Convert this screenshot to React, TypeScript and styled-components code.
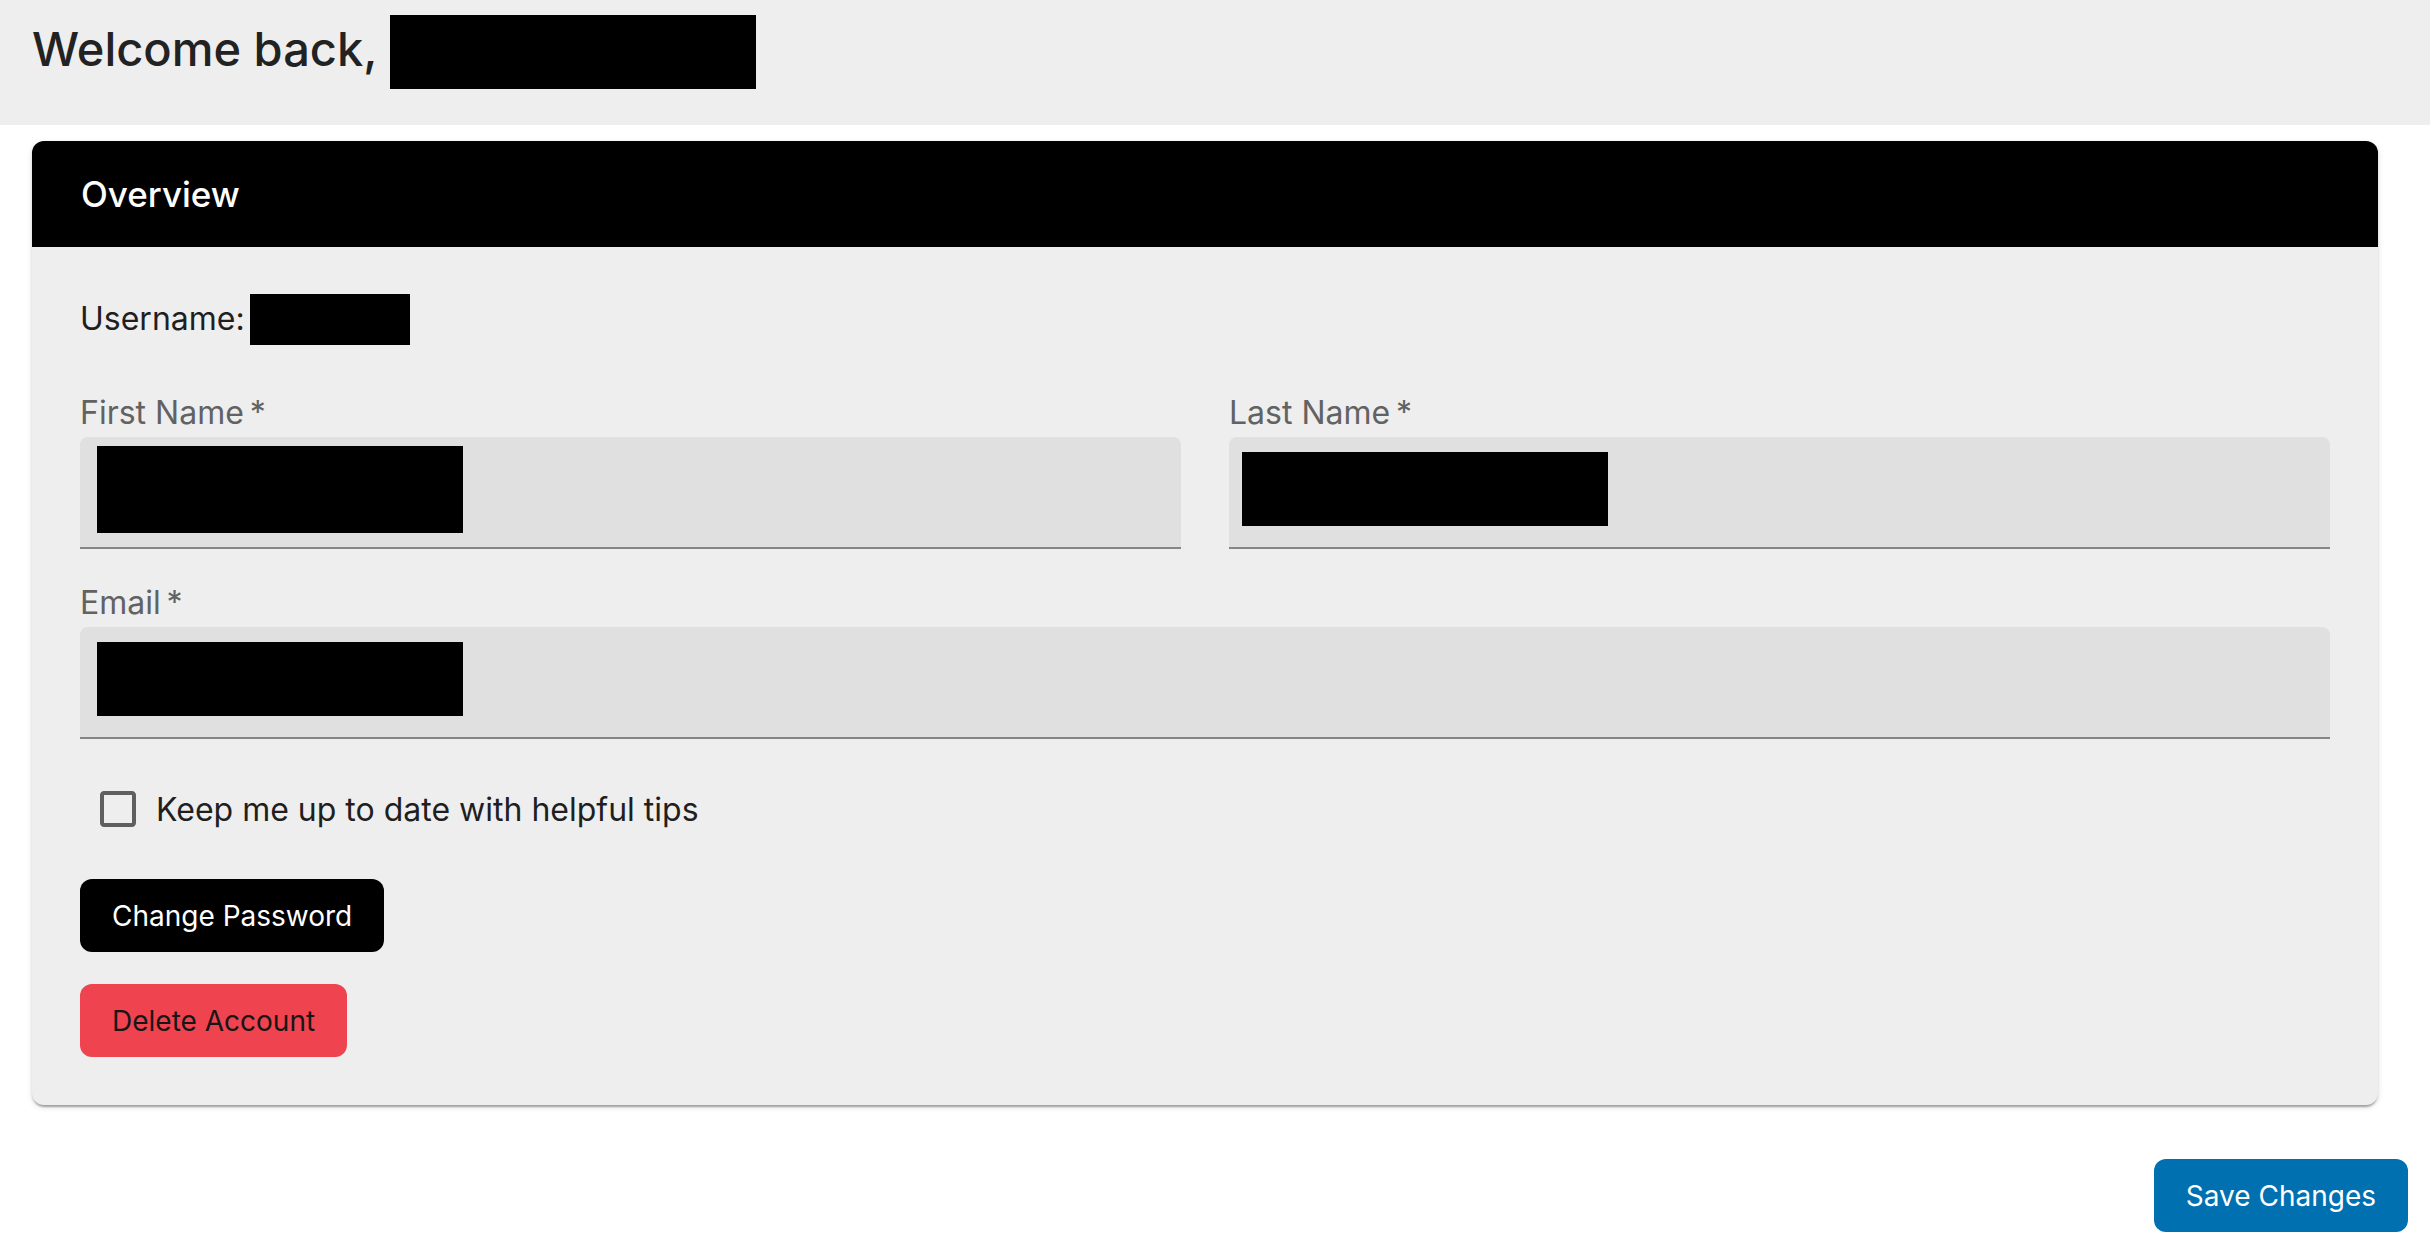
import React from "react";
import styled, { createGlobalStyle } from "styled-components";

const GlobalStyle = createGlobalStyle`
  html, body {
    margin: 0;
    padding: 0;
    background: #ffffff;
    font-family: Inter, "Noto Sans", "Liberation Sans", sans-serif;
    color: #1f1f1f;
  }
  * { box-sizing: border-box; }
`;

const Page = styled.div`
  display: flex;
  flex-direction: column;
  min-height: 1254px;
`;

const TopBand = styled.header`
  background: #eeeeee;
  height: 125px;
  padding: 15px 32px 0 32px;
`;

const Title = styled.h1`
  margin: 0;
  display: flex;
  align-items: flex-start;
  gap: 13px;
  font-size: 47px;
  font-weight: 500;
  line-height: 62px;
  color: #222222;
`;

const TitleText = styled.span`
  margin-top: 3px;
`;

const Redacted = styled.span<{ $w: number; $h: number; $ml?: number; $mt?: number }>`
  display: inline-block;
  flex: none;
  background: #000000;
  width: ${(p) => p.$w}px;
  height: ${(p) => p.$h}px;
  margin-left: ${(p) => p.$ml ?? 0}px;
  margin-top: ${(p) => p.$mt ?? 0}px;
`;

const Card = styled.section`
  margin: 16px 52px 0 32px;
  background: #eeeeee;
  border-radius: 12px;
  box-shadow: 0 4px 2px -2px rgba(0, 0, 0, 0.2), 0 2px 2px 0 rgba(0, 0, 0, 0.14),
    0 2px 6px 0 rgba(0, 0, 0, 0.12);
`;

const CardHeader = styled.div`
  height: 106px;
  background: #000000;
  border-radius: 12px 12px 0 0;
  display: flex;
  align-items: center;
  padding-left: 49px;
  color: #ffffff;
  font-size: 35px;
  font-weight: 500;
`;

const CardBody = styled.div`
  padding: 48px 48px 48px 48px;
  display: flex;
  flex-direction: column;
`;

const UsernameRow = styled.div`
  display: flex;
  align-items: center;
  height: 48px;
  font-size: 32px;
  line-height: 48px;
  color: #1f1f1f;
  margin-bottom: 46px;
`;

const NameGrid = styled.div`
  display: grid;
  grid-template-columns: 1fr 1fr;
  column-gap: 48px;
  margin-bottom: 30px;
`;

const Field = styled.div`
  display: flex;
  flex-direction: column;
`;

const Label = styled.label`
  font-size: 32px;
  line-height: 48px;
  color: #626262;
`;

const InputBox = styled.div`
  height: 112px;
  background: #e0e0e0;
  border-radius: 8px 8px 0 0;
  border-bottom: 2px solid #858585;
  display: flex;
  align-items: flex-start;
`;

const CheckRow = styled.label`
  display: flex;
  align-items: center;
  height: 84px;
  margin: 28px 0;
  padding-left: 14px;
  gap: 14px;
  font-size: 32px;
  color: #1f1f1f;
`;

const Actions = styled.div`
  display: flex;
  flex-direction: column;
  align-items: flex-start;
  gap: 32px;
`;

const Button = styled.button<{ $variant: "dark" | "danger" | "primary" }>`
  height: 73px;
  padding: 0 32px;
  border: none;
  border-radius: 12px;
  font-family: Inter, "Noto Sans", sans-serif;
  font-size: 28px;
  font-weight: 400;
  cursor: pointer;
  background: ${(p) =>
    p.$variant === "dark" ? "#000000" : p.$variant === "danger" ? "#ef434f" : "#0070b0"};
  color: ${(p) => (p.$variant === "danger" ? "#161616" : "#ffffff")};
`;

const Footer = styled.div`
  display: flex;
  justify-content: flex-end;
  padding-right: 22px;
  margin-top: 54px;
`;

function CheckboxIcon() {
  return (
    <svg width="48" height="48" viewBox="0 0 24 24" fill="#5f5f5f" aria-hidden>
      <path d="M19 5v14H5V5h14m0-2H5c-1.11 0-2 .9-2 2v14c0 1.1.89 2 2 2h14c1.1 0 2-.9 2-2V5c0-1.1-.9-2-2-2z" />
    </svg>
  );
}

export default function App() {
  return (
    <>
      <GlobalStyle />
      <Page>
        <TopBand>
          <Title>
            <TitleText>Welcome back,</TitleText>
            <Redacted $w={366} $h={74} />
          </Title>
        </TopBand>

        <Card>
          <CardHeader>Overview</CardHeader>
          <CardBody>
            <UsernameRow>
              Username:
              <Redacted $w={160} $h={51} $ml={5} />
            </UsernameRow>

            <NameGrid>
              <Field>
                <Label>First Name{"\u2009"}*</Label>
                <InputBox>
                  <Redacted $w={366} $h={87} $ml={17} $mt={9} />
                </InputBox>
              </Field>
              <Field>
                <Label>Last Name{"\u2009"}*</Label>
                <InputBox>
                  <Redacted $w={366} $h={74} $ml={13} $mt={15} />
                </InputBox>
              </Field>
            </NameGrid>

            <Field>
              <Label>Email{"\u2009"}*</Label>
              <InputBox>
                <Redacted $w={366} $h={74} $ml={17} $mt={15} />
              </InputBox>
            </Field>

            <CheckRow>
              <CheckboxIcon />
              Keep me up to date with helpful tips
            </CheckRow>

            <Actions>
              <Button $variant="dark">Change Password</Button>
              <Button $variant="danger">Delete Account</Button>
            </Actions>
          </CardBody>
        </Card>

        <Footer>
          <Button $variant="primary">Save Changes</Button>
        </Footer>
      </Page>
    </>
  );
}
